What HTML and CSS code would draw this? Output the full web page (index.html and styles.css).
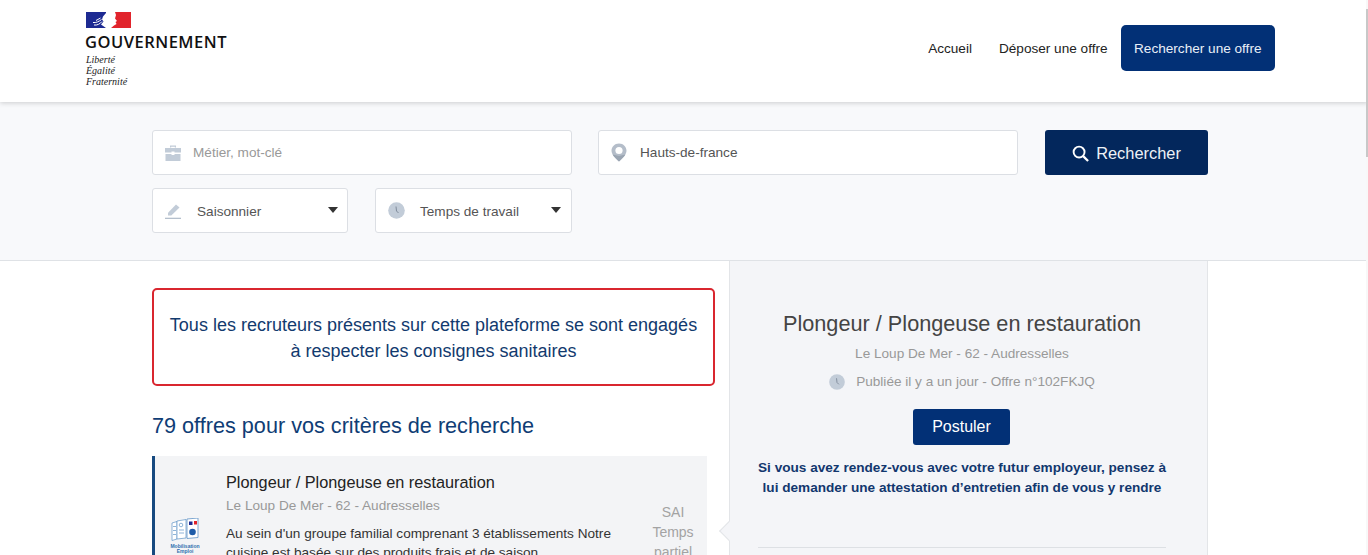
FILE: index.html
```html
<!DOCTYPE html>
<html lang="fr">
<head>
    <meta charset="UTF-8">
    <title>Offres - Mobilisation emploi</title>
    <link rel="stylesheet" href="styles.css">
</head>
<body>

    <header class="topbar">
        <div class="logo">
            <svg class="flag" width="45" height="16" viewBox="0 0 45 16">
                <rect x="0" y="0" width="20" height="16" fill="#1d2a92"/>
                <path d="M29 0H45V16H25L28 13.500L30.500 12L29.500 10L31 9L29 6.500L30 3Z" fill="#e1242c"/>
                <path d="M20 1L17 4.500L16 7.500L17.500 9.500L15 12.500L20 16H21V1Z" fill="#fff"/>
                <path d="M8 13C11 13.500 14 12 16 9.500M7 10.500C10 11 13 9.500 15.500 7.500M10 8.500L14.500 6" fill="none" stroke="#fff" stroke-width="1"/>
            </svg>
            <div class="logo-name">GOUVERNEMENT</div>
            <div class="logo-motto">Liberté<br>Égalité<br>Fraternité</div>
        </div>
        <nav class="topnav">
            <a class="navlink">Accueil</a>
            <a class="navlink">Déposer une offre</a>
            <a class="navbtn">Rechercher une offre</a>
        </nav>
    </header>

    <section class="search">
        <div class="search-grid">
            <div class="search-left">
                <div class="field field-wide">
                    <svg class="ico" width="16" height="16" viewBox="0 0 16 16"><path d="M5 2.500V0.500h6v2H9.800V1.700H6.200v.8zM0 3h16v4.500H9.500V6.500h-3v1H0zM0.500 9h6v1h3V9h6v7H0.500z" fill="#c2ccd8"/></svg>
                    <span class="placeholder">Métier, mot-clé</span>
                </div>
                <div class="select-row">
                    <div class="field field-select">
                        <svg class="ico" width="17" height="17" viewBox="0 0 17 17"><path d="M3 13.500V10.800L11 2.500 14.500 5.500 6.300 13.500z" fill="#c2ccd8"/><rect x="0" y="15.700" width="16" height="1.300" fill="#b4bfcc"/></svg>
                        <span class="value-select">Saisonnier</span>
                        <span class="caret"></span>
                    </div>
                    <div class="field field-select">
                        <svg class="ico" width="17" height="17" viewBox="0 0 17 17"><circle cx="8.500" cy="8.500" r="8.300" fill="#c2ccd8"/><path d="M8 4.500L8.500 9l2 2" fill="none" stroke="#7f8b9b" stroke-width="1"/></svg>
                        <span class="value-select">Temps de travail</span>
                        <span class="caret"></span>
                    </div>
                </div>
            </div>
            <div class="field field-wide field-place">
                <svg class="ico" width="16" height="19" viewBox="0 0 16 19"><path d="M8 0.500C3.600 0.500 0.500 3.800 0.500 7.800c0 4 4.800 8.200 7.500 10.700 2.700-2.500 7.500-6.700 7.500-10.700C15.500 3.800 12.400 0.500 8 0.500z" fill="#b4bdc9"/><path d="M1.500 11.500L8 13l6.500-1.500C12.800 14 10 16.700 8 18.500 6 16.700 3.200 14 1.500 11.500z" fill="#9aa5b2"/><circle cx="8" cy="7.500" r="3.600" fill="#fff"/></svg>
                <span class="value">Hauts-de-france</span>
            </div>
            <button class="search-btn">
                <svg width="17" height="17" viewBox="0 0 18 18"><circle cx="7.500" cy="7.500" r="5.800" fill="none" stroke="#fff" stroke-width="2"/><path d="M11.800 11.800L17 17" stroke="#fff" stroke-width="2.400"/></svg>
                Rechercher
            </button>
        </div>
    </section>

    <main class="results">
        <div class="results-left">
            <div class="notice">Tous les recruteurs présents sur cette plateforme se sont engagés à respecter les consignes sanitaires</div>
            <h2 class="count">79 offres pour vos critères de recherche</h2>
            <article class="offer">
                <div class="offer-logo">
                    <svg width="30" height="36" viewBox="0 0 30 36">
                        <path d="M2 5L7 3.500V21L2 22.500z" fill="#fff" stroke="#5f93c6" stroke-width="0.700"/>
                        <path d="M7 3L16 1.500V20L7 21z" fill="#fff" stroke="#5f93c6" stroke-width="0.700"/>
                        <path d="M17 1L28 0V19.500L17 20.500z" fill="#fff" stroke="#5f93c6" stroke-width="0.800"/>
                        <rect x="19" y="3.500" width="3.500" height="3.500" fill="#1d2a92"/>
                        <rect x="24" y="3" width="3" height="3.500" fill="#e1242c"/>
                        <circle cx="22.500" cy="14" r="3.300" fill="#1d5ba8"/>
                        <path d="M3 8.500h3M3 12.500h3M3 16.500h3M9 12h5M9 15h5" stroke="#5f93c6" stroke-width="0.700"/>
                        <circle cx="11" cy="7" r="1.800" fill="none" stroke="#5f93c6" stroke-width="0.700"/>
                        <text class="mini-text" x="15" y="29.500">Mobilisation</text>
                        <text class="mini-text" x="15" y="34.500">Emploi</text>
                    </svg>
                </div>
                <div class="offer-body">
                    <h3 class="offer-title">Plongeur / Plongeuse en restauration</h3>
                    <div class="offer-company">Le Loup De Mer - 62 - Audresselles</div>
                    <p class="offer-text">Au sein d'un groupe familial comprenant 3 établissements Notre cuisine est basée sur des produits frais et de saison</p>
                </div>
                <div class="offer-tags">SAI<br>Temps<br>partiel</div>
            </article>
        </div>

        <aside class="detail">
            <span class="detail-notch"></span>
            <h2 class="detail-title">Plongeur / Plongeuse en restauration</h2>
            <div class="detail-company">Le Loup De Mer - 62 - Audresselles</div>
            <div class="detail-date">
                <svg width="16" height="16" viewBox="0 0 17 17"><circle cx="8.500" cy="8.500" r="8.300" fill="#c2ccd8"/><path d="M8 4.500L8.500 9l2 2" fill="none" stroke="#7f8b9b" stroke-width="1"/></svg>
                Publiée il y a un jour - Offre n°102FKJQ
            </div>
            <button class="apply-btn">Postuler</button>
            <p class="detail-warn">Si vous avez rendez-vous avec votre futur employeur, pensez à lui demander une attestation d’entretien afin de vous y rendre</p>
            <hr class="detail-sep">
        </aside>
    </main>

    <div class="scrollbar"><div class="scrollbar-thumb"></div></div>

</body>
</html>
```

FILE: styles.css
```css
html, body {
    height: 555px;
    overflow: hidden;
}

body {
    font-family: "Liberation Sans", Arial, sans-serif;
    background-color: #fff;
    margin: 0;
    padding: 0;
    color: #333;
}

.topbar {
    height: 102px;
    box-sizing: border-box;
    padding: 12px 93px 0 85px;
    display: flex;
    justify-content: space-between;
    background-color: #fff;
    box-shadow: 0 1px 5px rgba(0, 0, 0, 0.18);
    position: relative;
}

.flag {
    display: block;
    margin-left: 1px;
}

.logo-name {
    font-family: "Open Sans", "Liberation Sans", sans-serif;
    font-weight: 600;
    font-size: 16.500px;
    line-height: 18px;
    margin-top: 5px;
    letter-spacing: 0.5px;
    color: #111;
}

.logo-motto {
    font-family: "Liberation Serif", serif;
    font-style: italic;
    font-size: 10px;
    line-height: 11px;
    margin: 3px 0 0 1px;
    color: #222;
}

.topnav {
    display: flex;
    align-items: flex-start;
    padding-top: 13px;
    font-size: 13.600px;
    color: #222;
}

.navlink {
    padding-top: 1px;
    line-height: 46px;
    margin-right: 27px;
}

.navlink + .navlink {
    margin-right: 13px;
}

.navbtn {
    background-color: #023076;
    color: #e8eef6;
    height: 46px;
    line-height: 47px;
    padding: 0 13.500px;
    border-radius: 5px;
}

.search {
    height: 159px;
    box-sizing: border-box;
    padding: 28px 0 0 152px;
    background-color: #f8f9fb;
    border-bottom: 1px solid #dfe2e6;
}

.search-grid {
    display: flex;
    align-items: flex-start;
    gap: 27px;
}

.search-left {
    width: 420px;
}

.field {
    height: 45px;
    box-sizing: border-box;
    background-color: #fff;
    border: 1px solid #dcdfe4;
    border-radius: 3px;
    display: flex;
    align-items: center;
    font-size: 13.600px;
}

.field-wide {
    width: 420px;
    padding-left: 12px;
}

.field-place {
    margin-left: -1px;
}

.ico {
    flex: none;
}

.placeholder {
    color: #999;
    margin-left: 12px;
    margin-bottom: 1px;
}

.value {
    color: #555;
    margin-left: 13px;
    margin-bottom: 1px;
}

.value-select {
    color: #555;
    margin-left: 15px;
    margin-top: 1px;
}

.select-row {
    display: flex;
    gap: 27px;
    margin-top: 13px;
}

.field-select {
    flex: 0 0 197px;
    padding: 0 10px 0 12px;
}

.field-select:first-child {
    flex-basis: 196px;
    padding-right: 9px;
}

.caret {
    margin-left: auto;
    margin-bottom: 1px;
    border-left: 5.500px solid transparent;
    border-right: 5.500px solid transparent;
    border-top: 6px solid #333;
}

.search-btn {
    width: 163px;
    height: 45px;
    display: flex;
    align-items: center;
    justify-content: center;
    gap: 7px;
    background-color: #03275c;
    color: #eef2f7;
    border: none;
    border-radius: 3px;
    font-family: inherit;
    font-size: 16.400px;
    padding-top: 2px;
}

.results {
    display: flex;
    padding-left: 152px;
}

.results-left {
    width: 577px;
    padding-top: 27px;
    box-sizing: border-box;
}

.notice {
    width: 563px;
    height: 98px;
    box-sizing: border-box;
    padding: 1px 15px 0;
    display: flex;
    align-items: center;
    text-align: center;
    border: 2px solid #d9262f;
    border-radius: 5px;
    font-size: 18px;
    line-height: 26px;
    color: #123a6e;
}

.count {
    margin: 26px 0 16px;
    font-size: 21.650px;
    line-height: 28px;
    font-weight: normal;
    color: #0f3d75;
}

.offer {
    width: 555px;
    height: 240px;
    box-sizing: border-box;
    display: flex;
    background-color: #f3f4f6;
    border-left: 3px solid #174a80;
}

.offer-logo {
    width: 71px;
    flex: none;
    padding: 62px 0 0 15px;
    box-sizing: border-box;
}

.mini-text {
    font-size: 5px;
    font-weight: bold;
    text-anchor: middle;
    fill: #2f6fae;
}

.offer-body {
    width: 413px;
    flex: none;
    padding-top: 15px;
}

.offer-title {
    margin: 0;
    font-size: 16.300px;
    line-height: 22px;
    font-weight: normal;
    color: #222;
}

.offer-company {
    font-size: 13.600px;
    line-height: 18px;
    margin-top: 4px;
    color: #999;
}

.offer-text {
    margin: 9px 0 0;
    font-size: 13.600px;
    line-height: 19px;
    color: #333;
}

.offer-tags {
    flex: 1;
    padding-top: 46px;
    text-align: center;
    font-size: 14px;
    line-height: 20px;
    color: #a3a3a3;
}

.detail {
    width: 479px;
    height: 300px;
    box-sizing: border-box;
    padding: 49px 41px 0 28px;
    position: relative;
    text-align: center;
    background-color: #f4f5f8;
    border-left: 1px solid #e3e5e8;
    border-right: 1px solid #e3e5e8;
}

.detail-notch {
    position: absolute;
    left: -8px;
    top: 263px;
    width: 14px;
    height: 14px;
    background-color: #f4f5f8;
    border-left: 1px solid #e3e5e8;
    border-bottom: 1px solid #e3e5e8;
    transform: rotate(45deg);
    box-sizing: border-box;
}

.detail-title {
    margin: 0 -10px;
    font-size: 21.700px;
    line-height: 28px;
    font-weight: normal;
    color: #444;
}

.detail-company {
    margin-top: 6px;
    font-size: 13.600px;
    line-height: 20px;
    color: #999;
}

.detail-date {
    margin-top: 8px;
    font-size: 13.600px;
    line-height: 20px;
    color: #999;
    display: flex;
    justify-content: center;
    align-items: center;
    gap: 11px;
}

.apply-btn {
    display: block;
    width: 97px;
    height: 36px;
    margin: 17px 0 0 155px;
    background-color: #023076;
    color: #fff;
    border: none;
    border-radius: 3px;
    font-family: inherit;
    font-size: 16px;
}

.detail-warn {
    margin: 13px 0 0;
    font-size: 13.600px;
    line-height: 20px;
    font-weight: bold;
    color: #12376e;
}

.detail-sep {
    margin: 49px 0 0;
    border: none;
    border-top: 1px solid #dde0e4;
}

.scrollbar {
    position: absolute;
    top: 0;
    right: 0;
    width: 2px;
    height: 555px;
    background-color: #f8f8f8;
}

.scrollbar-thumb {
    height: 148px;
    margin-top: 9px;
    background-color: #c8c8c8;
}
```
